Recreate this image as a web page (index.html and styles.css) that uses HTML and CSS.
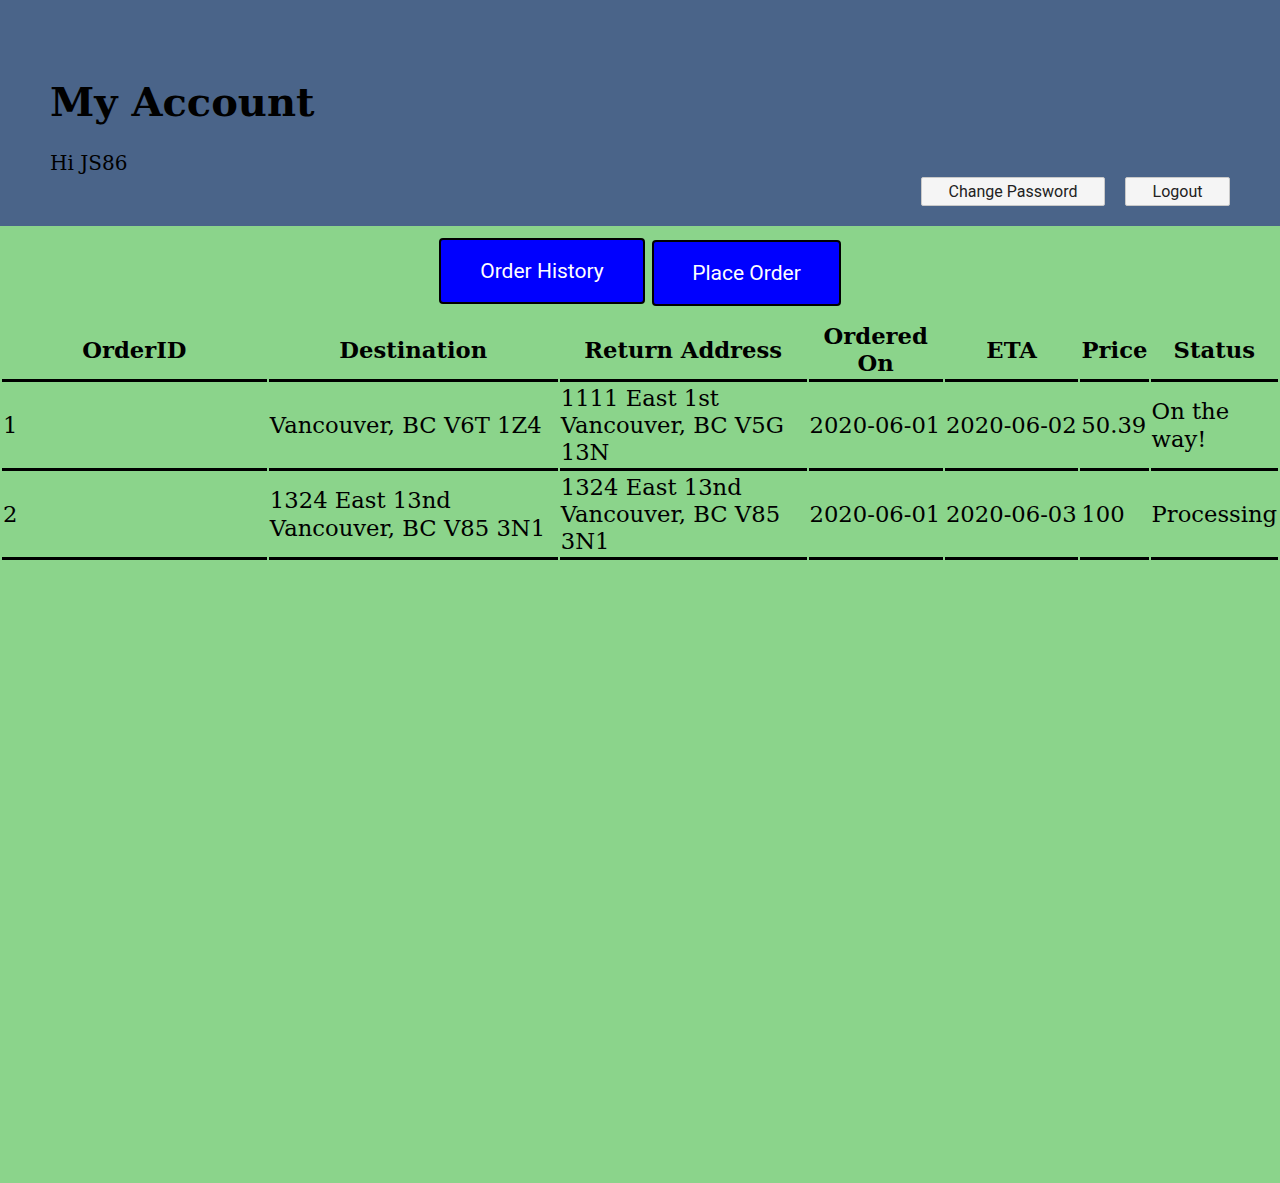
FILE: index.html
```html
<!DOCTYPE html>
<html lang="en">
<head>
<meta charset="utf-8">
<title>My Account</title>
<link rel="stylesheet" href="styles.css">
</head>
<body>
<header class="header">
  <div class="greeting">
    <h1 class="title">My Account</h1>
    <p class="hello">Hi JS86</p>
  </div>
  <div class="account-actions">
    <button class="small-btn btn-password">Change Password</button>
    <button class="small-btn btn-logout">Logout</button>
  </div>
</header>
<nav class="tabs">
  <button class="tab tab-history">Order History</button>
  <button class="tab tab-place">Place Order</button>
</nav>
<table class="orders">
  <colgroup>
    <col class="c-id">
    <col class="c-dest">
    <col class="c-ret">
    <col class="c-on">
    <col class="c-eta">
    <col class="c-price">
    <col class="c-status">
  </colgroup>
  <thead>
    <tr>
      <th>OrderID</th>
      <th>Destination</th>
      <th>Return Address</th>
      <th>Ordered On</th>
      <th>ETA</th>
      <th>Price</th>
      <th>Status</th>
    </tr>
  </thead>
  <tbody>
    <tr>
      <td>1</td>
      <td>Vancouver, BC V6T 1Z4</td>
      <td>1111 East 1st Vancouver, BC V5G 13N</td>
      <td>2020-06-01</td>
      <td>2020-06-02</td>
      <td>50.39</td>
      <td>On the way!</td>
    </tr>
    <tr>
      <td>2</td>
      <td>1324 East 13nd Vancouver, BC V85 3N1</td>
      <td>1324 East 13nd Vancouver, BC V85 3N1</td>
      <td>2020-06-01</td>
      <td>2020-06-03</td>
      <td>100</td>
      <td>Processing</td>
    </tr>
  </tbody>
</table>
</body>
</html>
```

FILE: styles.css
```css
html, body {
  margin: 0;
  padding: 0;
}
body {
  background: #8bd48b;
  font-family: "DejaVu Serif", serif;
  color: #000;
  min-height: 1183px;
}
.header {
  background: #4a6489;
  height: 226px;
  box-sizing: border-box;
  padding: 78px 50px 20px 50px;
  display: flex;
  justify-content: space-between;
  align-items: flex-end;
}
.greeting {
  align-self: flex-start;
}
.title {
  margin: 0;
  font-size: 40px;
  font-weight: bold;
}
.hello {
  margin: 26px 0 0 0;
  font-size: 20px;
}
.account-actions {
  display: flex;
  gap: 20px;
}
.small-btn {
  font-family: Roboto, "Open Sans", sans-serif;
  font-size: 16px;
  color: #222;
  background: #f5f5f5;
  border: 1px solid #c9c9c9;
  border-radius: 2px;
  height: 29px;
  padding: 0;
}
.btn-password { width: 184px; }
.btn-logout { width: 105px; }
.tabs {
  display: flex;
  justify-content: center;
  align-items: flex-start;
  gap: 7px;
  padding-top: 12px;
}
.tab {
  font-family: Roboto, "Open Sans", sans-serif;
  font-size: 21px;
  color: #fff;
  background: #0000ff;
  border: 2px solid #000;
  border-radius: 4px;
  height: 66px;
  padding: 0;
}
.tab-history { width: 206px; }
.tab-place { width: 189px; margin-top: 2px; }
.orders {
  width: 100%;
  table-layout: fixed;
  border-spacing: 2px;
  margin-top: 14px;
  font-size: 22.7px;
  line-height: 27.33px;
}
.c-id { width: 264px; }
.c-dest { width: 288px; }
.c-ret { width: 246px; }
.c-on { width: 134px; }
.c-eta { width: 133px; }
.c-price { width: 68px; }
.c-status { width: 127px; }
.orders th, .orders td {
  padding: 1px;
  border-bottom: 3px solid #000;
  vertical-align: middle;
}
.orders th {
  font-weight: bold;
  text-align: center;
}
.orders td {
  text-align: left;
}
```
